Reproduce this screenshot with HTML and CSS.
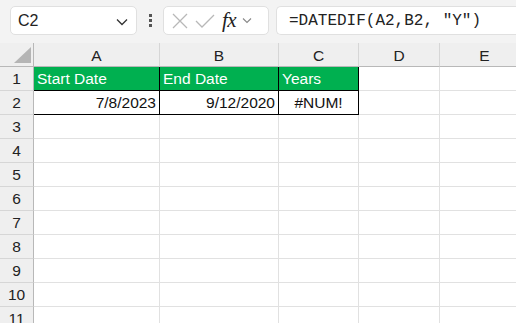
FILE: index.html
```html
<!DOCTYPE html>
<html lang="en">
<head>
  <meta charset="UTF-8">
  <title>DATEDIF</title>
  <link rel="stylesheet" href="styles.css">
</head>
<body>

  <div class="toolbar">
    <div class="name-box">
      <span>C2</span>
      <svg class="chev" width="12" height="8" viewBox="0 0 12 8"><path d="M1 1.5 L6 6.5 L11 1.5" fill="none" stroke="#333" stroke-width="1.3"/></svg>
    </div>
    <div class="dots"><i></i><i></i><i></i></div>
    <div class="fx-box">
      <svg width="18" height="18" viewBox="0 0 18 18"><path d="M2 2 L16 16 M16 2 L2 16" stroke="#b8b8b8" stroke-width="1.3"/></svg>
      <svg width="20" height="18" viewBox="0 0 20 18"><path d="M1 9 L7 15 L19 3" fill="none" stroke="#b8b8b8" stroke-width="1.3"/></svg>
      <span class="fx">fx</span>
      <svg width="10" height="7" viewBox="0 0 10 7"><path d="M1 1.5 L5 5.5 L9 1.5" fill="none" stroke="#888" stroke-width="1.1"/></svg>
    </div>
    <div class="formula">=DATEDIF(A2,B2, "Y")</div>
  </div>

  <div class="sheet">
    <div class="corner"><span class="tri"></span></div>
    <div class="colhead">A</div>
    <div class="colhead">B</div>
    <div class="colhead">C</div>
    <div class="colhead">D</div>
    <div class="colhead">E</div>

    <div class="rowhead">1</div>
    <div class="cell head">Start Date</div>
    <div class="cell head">End Date</div>
    <div class="cell head">Years</div>
    <div class="cell"></div>
    <div class="cell"></div>

    <div class="rowhead">2</div>
    <div class="cell data right">7/8/2023</div>
    <div class="cell data right">9/12/2020</div>
    <div class="cell data center">#NUM!</div>
    <div class="cell"></div>
    <div class="cell"></div>

    <div class="rowhead">3</div><div class="cell"></div><div class="cell"></div><div class="cell"></div><div class="cell"></div><div class="cell"></div>
    <div class="rowhead">4</div><div class="cell"></div><div class="cell"></div><div class="cell"></div><div class="cell"></div><div class="cell"></div>
    <div class="rowhead">5</div><div class="cell"></div><div class="cell"></div><div class="cell"></div><div class="cell"></div><div class="cell"></div>
    <div class="rowhead">6</div><div class="cell"></div><div class="cell"></div><div class="cell"></div><div class="cell"></div><div class="cell"></div>
    <div class="rowhead">7</div><div class="cell"></div><div class="cell"></div><div class="cell"></div><div class="cell"></div><div class="cell"></div>
    <div class="rowhead">8</div><div class="cell"></div><div class="cell"></div><div class="cell"></div><div class="cell"></div><div class="cell"></div>
    <div class="rowhead">9</div><div class="cell"></div><div class="cell"></div><div class="cell"></div><div class="cell"></div><div class="cell"></div>
    <div class="rowhead">10</div><div class="cell"></div><div class="cell"></div><div class="cell"></div><div class="cell"></div><div class="cell"></div>
    <div class="rowhead">11</div><div class="cell"></div><div class="cell"></div><div class="cell"></div><div class="cell"></div><div class="cell"></div>
  </div>

</body>
</html>
```

FILE: styles.css
```css
* {
  box-sizing: border-box;
  margin: 0;
  padding: 0;
}

body {
  font-family: 'Liberation Sans', Arial, sans-serif;
  background: #f3f3f3;
  width: 516px;
  height: 323px;
  overflow: hidden;
}

.toolbar {
  height: 43px;
  display: flex;
  align-items: flex-start;
  padding: 6px 0 0 10px;
  background: #f3f3f3;
}

.name-box,
.fx-box,
.formula {
  height: 29px;
  background: #fff;
  border: 1px solid #e0e0e0;
  border-radius: 5px;
  display: flex;
  align-items: center;
}

.name-box {
  width: 127px;
  padding: 0 8px 0 7px;
  justify-content: space-between;
  font-size: 16px;
  color: #222;
}

.chev {
  margin-top: 2px;
}

.dots {
  width: 26px;
  height: 29px;
  display: flex;
  flex-direction: column;
  align-items: center;
  justify-content: center;
  gap: 2px;
}

.dots i {
  width: 3px;
  height: 3px;
  background: #555;
}

.fx-box {
  width: 106px;
  padding: 0 4px 0 7px;
  gap: 6px;
}

.fx {
  font-family: 'Liberation Serif', serif;
  font-style: italic;
  font-size: 21px;
  color: #222;
  margin-left: 1px;
  letter-spacing: -0.5px;
}

.formula {
  flex: 1;
  margin-left: 7px;
  border-right: none;
  border-radius: 5px 0 0 5px;
  padding-left: 12px;
  font-family: 'Liberation Mono', monospace;
  font-size: 16px;
  color: #222;
}

.sheet {
  display: grid;
  grid-template-columns: 34px 126px 119px 80px 81px 90px;
  grid-auto-rows: 24px;
  background: #fff;
}

.corner,
.colhead {
  background: #efefef;
  border-bottom: 1px solid #b8b8b8;
}

.corner {
  border-right: 1px solid #b8b8b8;
  position: relative;
}

.tri {
  position: absolute;
  right: 2px;
  bottom: 3px;
  width: 0;
  height: 0;
  border-left: 17px solid transparent;
  border-bottom: 16px solid #b5b5b5;
}

.colhead {
  border-right: 1px solid #d6d6d6;
  display: flex;
  align-items: center;
  justify-content: center;
  font-size: 15.5px;
  color: #222;
  padding-top: 2px;
}

.rowhead {
  background: #efefef;
  border-right: 1px solid #b8b8b8;
  border-bottom: 1px solid #d6d6d6;
  display: flex;
  align-items: center;
  justify-content: center;
  font-size: 15.5px;
  color: #222;
}

.cell {
  border-right: 1px solid #e1e1e1;
  border-bottom: 1px solid #e1e1e1;
  display: flex;
  align-items: center;
  font-size: 15.5px;
  padding: 0 3px;
  white-space: nowrap;
}

.cell.head {
  background: #00b050;
  color: #fff;
  border-right: 1px solid #000;
  border-bottom: 1px solid #000;
}

.cell.data {
  border-right: 1px solid #000;
  border-bottom: 1px solid #000;
  color: #111;
}

.right {
  justify-content: flex-end;
}

.center {
  justify-content: center;
}
```
